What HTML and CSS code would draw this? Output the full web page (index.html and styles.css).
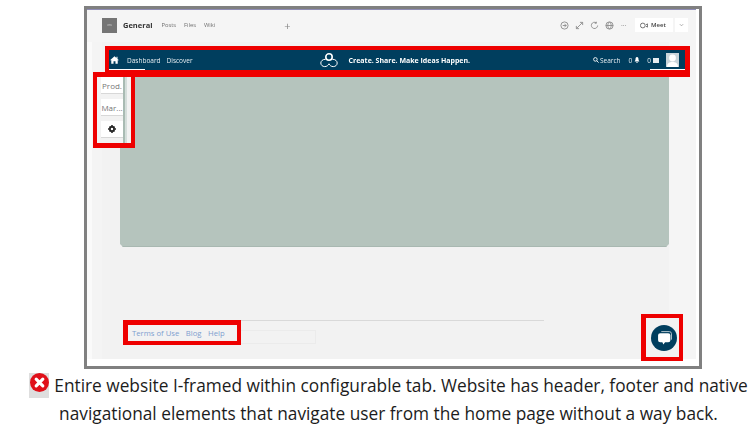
FILE: index.html
```html
<!DOCTYPE html>
<html lang="en">
<head>
<meta charset="utf-8">
<title>Entire website I-framed within configurable tab</title>
<link rel="stylesheet" href="styles.css">
</head>
<body>
<figure class="shot">
  <div class="tabbar">
    <span class="team-icon">ww</span>
    <b class="channel">General</b>
    <span class="tab">Posts</span>
    <span class="tab">Files</span>
    <span class="tab">Wiki</span>
    <span class="plus">+</span>
    <div class="tools">
      <svg class="tool" viewBox="0 0 10 10"><circle cx="5" cy="5" r="4"/><path d="M3 5h4M5 3.500 7 5 5 6.500"/></svg>
      <svg class="tool" viewBox="0 0 10 10"><path d="M1.500 8.500 8.500 1.500M5.500 1.500h3v3M1.500 5.500v3h3"/></svg>
      <svg class="tool" viewBox="0 0 10 10"><path d="M8.500 5A3.500 3.500 0 1 1 7 2M7 .8V2.500H5.300"/></svg>
      <svg class="tool" viewBox="0 0 10 10"><circle cx="5" cy="5" r="4"/><path d="M1 5h8M5 1c-2.500 2.500-2.500 5.500 0 8M5 1c2.500 2.500 2.500 5.500 0 8"/></svg>
      <span class="dots">···</span>
      <span class="meet">
        <svg class="cam" viewBox="0 0 10 8"><circle cx="3.500" cy="4" r="3"/><path d="M7.500 3 9.500 2v4L7.500 5"/></svg>
        Meet
      </span>
      <span class="meet-more">
        <svg viewBox="0 0 6 4"><path d="M1 1l2 2 2-2"/></svg>
      </span>
    </div>
  </div>

  <div class="page">
    <div class="nav-frame">
      <nav class="nav">
        <svg class="home" viewBox="0 0 12 10"><path d="M6 0 0 5.200h1.700V10h3V6.800h2.600V10h3V5.200H12L10 3.500V.8H8.600v1.500z"/></svg>
        <a class="nav-link">Dashboard</a>
        <a class="nav-link">Discover</a>
        <svg class="logo" viewBox="0 0 18 16"><circle class="logo-top" cx="9" cy="5" r="3.200"/><path d="M5.600 7.300C2.500 7.200 .8 9.200.8 11c0 2 1.700 3.600 3.900 3.600 2.200 0 3.400-1.200 4.300-2.800.9 1.600 2.100 2.800 4.300 2.800 2.200 0 3.900-1.600 3.900-3.600 0-1.800-1.700-3.800-4.800-3.700"/></svg>
        <strong class="tagline">Create. Share. Make Ideas Happen.</strong>
        <div class="nav-right">
          <svg class="search" viewBox="0 0 8 8"><circle cx="3.200" cy="3.200" r="2.400"/><path d="M5 5l2.500 2.500"/></svg>
          <span class="search-text">Search</span>
          <span class="count">0</span>
          <svg class="bell" viewBox="0 0 8 8"><path d="M4 0C2.400 0 2 1.500 2 3c0 1.500-.6 2.300-1.200 3h6.400C6.600 5.300 6 4.500 6 3c0-1.500-.4-3-2-3zM3 6.700h2C5 7.500 4.500 8 4 8s-1-.5-1-1.300z"/></svg>
          <span class="count count-gap">0</span>
          <span class="mail"></span>
          <span class="avatar">
            <svg viewBox="0 0 13 14"><rect width="13" height="14" fill="#c9d4da"/><circle cx="6.500" cy="5" r="3.400" fill="#fff"/><path d="M1 14c0-4 2.500-5 5.500-5s5.500 1 5.500 5z" fill="#fff"/></svg>
          </span>
        </div>
      </nav>
    </div>

    <div class="panel"></div>

    <div class="foot">
      <div class="foot-links">
        <a>Terms of Use</a>
        <a>Blog</a>
        <a>Help</a>
      </div>
      <div class="foot-box"></div>
    </div>
  </div>

  <aside class="side-frame">
    <div class="side-tabs">
      <span class="side-tab">Prod.</span>
      <span class="side-tab">Mar...</span>
      <span class="side-tab">
        <svg class="gear" viewBox="0 0 10 10"><circle cx="5" cy="5" r="2.600" fill="none" stroke="#222" stroke-width="2"/><path d="M4 0h2v2H4zM4 8h2v2H4zM0 4h2v2H0zM8 4h2v2H8zM1.200 2.600 2.600 1.200 4 2.600 2.600 4zM6 7.400 7.400 6l1.400 1.400-1.400 1.400zM7.400 1.200l1.400 1.400L7.400 4 6 2.600zM2.600 6 4 7.400 2.600 8.800 1.200 7.400z" fill="#222"/></svg>
      </span>
    </div>
    <div class="side-bar"></div>
  </aside>

  <div class="chat-frame">
    <span class="chat">
      <svg viewBox="0 0 14 14"><path d="M4 1.500h7.500a2 2 0 0 1 2 2V9" fill="none" stroke="#cfd9de" stroke-width=".8"/><path d="M3 3h7.500A2 2 0 0 1 12.500 5v4.500a2 2 0 0 1-2 2H7.500L6 13.500 5 11.500H3a2 2 0 0 1-2-2V5a2 2 0 0 1 2-2z" fill="#fff"/></svg>
    </span>
  </div>
</figure>

<div class="caption">
  <p class="line">
    <span class="err"><svg viewBox="0 0 19 19"><circle cx="9.500" cy="9.500" r="9.500" fill="#e0101a"/><path d="M6.200 6.200l6.600 6.600M12.800 6.200l-6.600 6.600" stroke="#fff" stroke-width="3.200" stroke-linecap="round"/></svg></span>Entire website I-framed within configurable tab. Website has header, footer and native
  </p>
  <p class="line">navigational elements that navigate user from the home page without a way back.</p>
</div>
</body>
</html>
```

FILE: styles.css
```css
* { box-sizing: border-box; }

html, body {
  margin: 0;
  height: 425px;
  overflow: hidden;
  background: #fff;
}

body {
  font-family: "Open Sans", "Noto Sans", sans-serif;
  color: #222;
}

.shot {
  position: relative;
  display: flex;
  flex-direction: column;
  width: 618px;
  height: 363px;
  margin: 6px 0 0 84px;
  border: 3px solid #808080;
  background: #fff;
  overflow: hidden;
}

/* Channel tab bar */
.tabbar {
  display: flex;
  align-items: center;
  flex: none;
  height: 33px;
  margin-right: 3px;
  padding: 0 8px 2px 15px;
  border-top: 1px solid #8f8db5;
  background: #f5f5f5;
  filter: blur(.35px);
}

.team-icon {
  display: flex;
  align-items: center;
  justify-content: center;
  width: 15px;
  height: 15px;
  margin-right: 6px;
  background: #757575;
  color: #ccc;
  font-size: 3px;
}

.channel {
  margin-right: 9px;
  font-size: 7.500px;
  color: #333;
}

.tab {
  margin-right: 8px;
  font-size: 5.800px;
  color: #707070;
}

.plus {
  margin-left: 61px;
  font-size: 11px;
  line-height: 1;
  color: #888;
}

.tools {
  display: flex;
  align-items: center;
  margin-left: auto;
}

.tool {
  width: 9px;
  height: 9px;
  margin-right: 6px;
  fill: none;
  stroke: #8c8c8c;
  stroke-width: 1;
}

.dots {
  width: 14px;
  margin-left: 1px;
  font-size: 7px;
  color: #777;
}

.meet {
  display: flex;
  align-items: center;
  gap: 3px;
  width: 38px;
  height: 14px;
  padding-left: 5px;
  background: #fff;
  font-size: 6px;
  font-weight: 600;
  color: #444;
}

.cam {
  width: 8px;
  height: 7px;
  fill: none;
  stroke: #555;
  stroke-width: 1;
}

.meet-more {
  display: flex;
  align-items: center;
  justify-content: center;
  width: 13px;
  height: 14px;
  margin-left: 2px;
  background: #fff;
}

.meet-more svg {
  width: 5px;
  height: 4px;
  fill: none;
  stroke: #888;
  stroke-width: .8;
}

/* Framed page */
.page {
  display: flex;
  flex-direction: column;
  flex: 1;
  margin: 0 3px 7px 0;
  padding-top: 4px;
  background: linear-gradient(90deg, #fafafa 0 5px, #f4f4f4 5px 15px, #f2f2f2 15px 582px, #f5f5f5 582px);
}

.nav-frame {
  flex: none;
  width: 585px;
  height: 31px;
  margin-left: 18px;
  border: solid #ee0000;
  border-width: 4px 5px 7px 4px;
}

.nav {
  display: flex;
  align-items: center;
  height: 20px;
  padding: 0 6px 0 1px;
  background: linear-gradient(90deg, #fff 0 36px, transparent 36px 541px, #fff 541px) left bottom / 100% 1px no-repeat #003e5e;
  color: #e6edf1;
  font-size: 6.500px;
  filter: blur(.3px);
}

.home {
  width: 9px;
  height: 8px;
  margin-right: 8px;
  fill: #fff;
}

.nav-link {
  margin-right: 6px;
  white-space: nowrap;
}

.logo {
  width: 18px;
  height: 16px;
  margin-left: 121px;
  fill: none;
  stroke: #fff;
  stroke-width: 1;
}

.logo-top {
  stroke-width: 1.600;
}

.tagline {
  margin-left: 11px;
  font-size: 7px;
  color: #fff;
  white-space: nowrap;
}

.nav-right {
  display: flex;
  align-items: center;
  margin-left: auto;
}

.search {
  width: 6px;
  height: 6px;
  margin-right: 1px;
  fill: none;
  stroke: #fff;
  stroke-width: 1.200;
}

.search-text {
  margin-right: 8px;
}

.count {
  margin-right: 2px;
}

.count-gap {
  margin-left: 7px;
}

.bell {
  width: 6px;
  height: 6px;
  fill: #fff;
}

.mail {
  width: 6px;
  height: 5px;
  margin-right: 7px;
  background: #e6edf1;
}

.avatar {
  display: block;
  width: 13px;
  height: 14px;
}

.avatar svg {
  display: block;
  width: 13px;
  height: 14px;
}

.panel {
  flex: none;
  width: 549px;
  height: 170px;
  margin-left: 33px;
  background: #b5c4bd;
  border-bottom: 1px solid #a8b8b1;
  clip-path: polygon(0 0, 100% 0, 100% calc(100% - 3px), calc(100% - 3px) 100%, 3px 100%, 0 calc(100% - 3px));
}

/* Footer */
.foot {
  display: flex;
  align-items: flex-start;
  flex: none;
  width: 420px;
  margin: 73px 0 0 37px;
  border-top: 1px solid #d9d9d9;
}

.foot-links {
  display: flex;
  align-items: center;
  gap: 6.500px;
  flex: none;
  width: 118px;
  height: 25px;
  margin: -1px 0 0 -1px;
  padding-left: 4px;
  border: solid #ee0000;
  border-width: 5px 4px 4px 5px;
  background: #f2f2f2;
  font-size: 7.700px;
  color: #7f9fd0;
  white-space: nowrap;
}

.foot-box {
  width: 75px;
  height: 14px;
  margin-top: 9px;
  border: 1px solid #ebebeb;
  border-left: 0;
}

/* Overlaid call-outs */
.side-frame {
  position: absolute;
  top: 63px;
  left: 6px;
  display: flex;
  width: 42px;
  height: 76px;
  padding: 0 6px 0 4px;
  border: solid #ee0000;
  border-width: 0 4px 5px 4px;
  background: #f2f2f2;
  box-shadow: inset 0 5px 0 #ee0000;
}

.side-tabs {
  display: flex;
  flex-direction: column;
  gap: 5px;
  flex: none;
  width: 22px;
  padding-top: 5px;
}

.side-tab {
  display: flex;
  align-items: center;
  justify-content: center;
  height: 17px;
  border-bottom: 1px solid #d8d8d8;
  background: #fff;
  font-size: 8px;
  color: #777;
  white-space: nowrap;
  overflow: hidden;
}

.gear {
  width: 8px;
  height: 8px;
}

.side-bar {
  width: 2px;
  margin: 5px 0 0 0;
  background: #a9bbb3;
  box-shadow: 2px 0 0 #d5dedb;
}

.chat-frame {
  position: absolute;
  top: 305px;
  left: 554px;
  display: flex;
  align-items: center;
  justify-content: center;
  width: 42px;
  height: 47px;
  padding-left: 3px;
  border: solid #ee0000;
  border-width: 4px 4px 4px 5px;
  background: #f2f2f2;
}

.chat {
  display: flex;
  align-items: center;
  justify-content: center;
  width: 26px;
  height: 26px;
  border-radius: 50%;
  background: #003e5e;
}

.chat svg {
  width: 15px;
  height: 15px;
}

/* Caption */
.caption {
  width: 777px;
  padding-top: 3px;
  text-align: center;
  font-size: 17.300px;
  line-height: 27.500px;
  color: #1c1c1c;
}

.line {
  margin: 0;
  white-space: nowrap;
}

.err {
  display: inline-block;
  width: 20px;
  height: 25px;
  margin-right: 5px;
  vertical-align: -6px;
  background: #dedede;
}

.err svg {
  display: block;
  width: 19px;
  height: 19px;
  margin-left: 1px;
}
```
